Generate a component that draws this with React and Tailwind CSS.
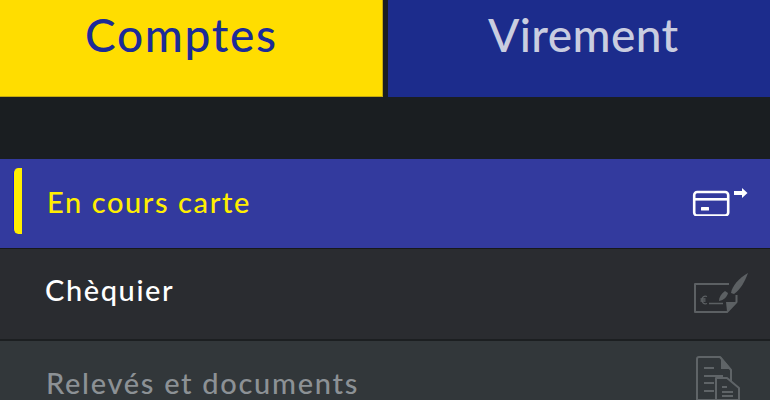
function CardIcon() {
  return (
    <svg width="56" height="28" viewBox="0 0 56 28" fill="none">
      <rect x="2.200" y="4" width="34" height="23.500" rx="3" stroke="#fff" strokeWidth="2.600" />
      <rect x="2" y="10" width="34" height="2.600" fill="#fff" />
      <rect x="9" y="19" width="8" height="3.500" rx="0.500" fill="#fff" />
      <path d="M42 3h8V0l5.500 5-5.500 5V7h-8z" fill="#fff" />
    </svg>
  );
}

function ChequeIcon() {
  return (
    <svg width="56" height="46" viewBox="0 0 56 46" fill="none">
      <path d="M36 12H2v28h32l9.500-10V23" stroke="#5c6063" strokeWidth="2" strokeLinejoin="round" />
      <path d="M33 30h10l-9 9z" fill="#5c6063" />
      <path d="M16 31.500h14" stroke="#5c6063" strokeWidth="1.500" />
      <path d="M14 24.500c-3-1-5 .5-5 3.500s2 4.500 5 3.500M7.500 27h5M7.500 29h5" stroke="#5c6063" strokeWidth="1.300" />
      <path d="M26 29c0-4 2-7 6-10l3 2c-1 4-4 7-9 8z" fill="#5c6063" />
      <path d="M38 21c1-7 8-15 17-20-3 8-7 16-14 21z" fill="#5c6063" />
    </svg>
  );
}

function DocIcon() {
  return (
    <svg width="46" height="44" viewBox="0 0 46 44" fill="none">
      <path d="M2 3a2 2 0 0 1 2-2h21l11 13v30H2z" stroke="#5f6467" strokeWidth="2" strokeLinejoin="round" />
      <path d="M26 1v12h10z" fill="#5f6467" />
      <path d="M9 12h10M9 20h19M9 27h10M9 35h10" stroke="#5f6467" strokeWidth="2" />
      <path d="M21 22h11l12 10v12H21z" fill="#32373a" stroke="#5f6467" strokeWidth="2" strokeLinejoin="round" />
      <path d="M27 31h5M27 36h11M27 40h11" stroke="#5f6467" strokeWidth="2" />
    </svg>
  );
}

export default function App() {
  return (
    <div className="w-[770px] h-[400px] overflow-hidden bg-[#1a1e21] font-['Lato',sans-serif] font-medium">
      {/* tabs */}
      <div className="flex gap-[5px] h-[97px]">
        <div className="w-[383px] bg-[#ffdd00] border-b border-r border-[#c4aa10] pl-[85px] pt-[7px] text-[#1c2b98] text-[46px] leading-[56px] tracking-[1.700px]">
          Comptes
        </div>
        <div className="flex-1 bg-[#1c2c8c] pl-[100px] pt-[7px] text-[#c9cde0] text-[46px] leading-[56px] tracking-[0.400px]">
          Virement
        </div>
      </div>

      <div className="h-[62px]" />

      {/* active row */}
      <div className="h-[89px] bg-[#333a9e] flex items-center">
        <div className="w-[9px] h-[66px] ml-[13px] -mt-[5px] bg-[#ffee00] rounded-l-[5px] border-l border-[#1a1ed0]" />
        <span className="ml-[25px] -mt-[4px] text-[#ffee00] text-[29px] tracking-[1.600px]">En cours carte</span>
        <div className="ml-auto mr-[22px] -mt-[3px]">
          <CardIcon />
        </div>
      </div>

      <div className="h-[91px] bg-[#2a2c30] border-t border-[#17191b] flex items-center">
        <span className="ml-[45px] -mt-[8px] text-white text-[29px] tracking-[1.600px]">Chèquier</span>
        <div className="ml-auto mr-[21px] mt-[2px]">
          <ChequeIcon />
        </div>
      </div>

      <div className="h-[90px] bg-[#32373a] border-t-2 border-[#1c1f21] pl-[46px] pr-[29px] pt-[27px] flex justify-between">
        <span className="text-[#8c9195] text-[29px] leading-[30px] tracking-[1.700px]">Relevés et documents</span>
        <div className="-mt-[12px]">
          <DocIcon />
        </div>
      </div>
    </div>
  );
}
